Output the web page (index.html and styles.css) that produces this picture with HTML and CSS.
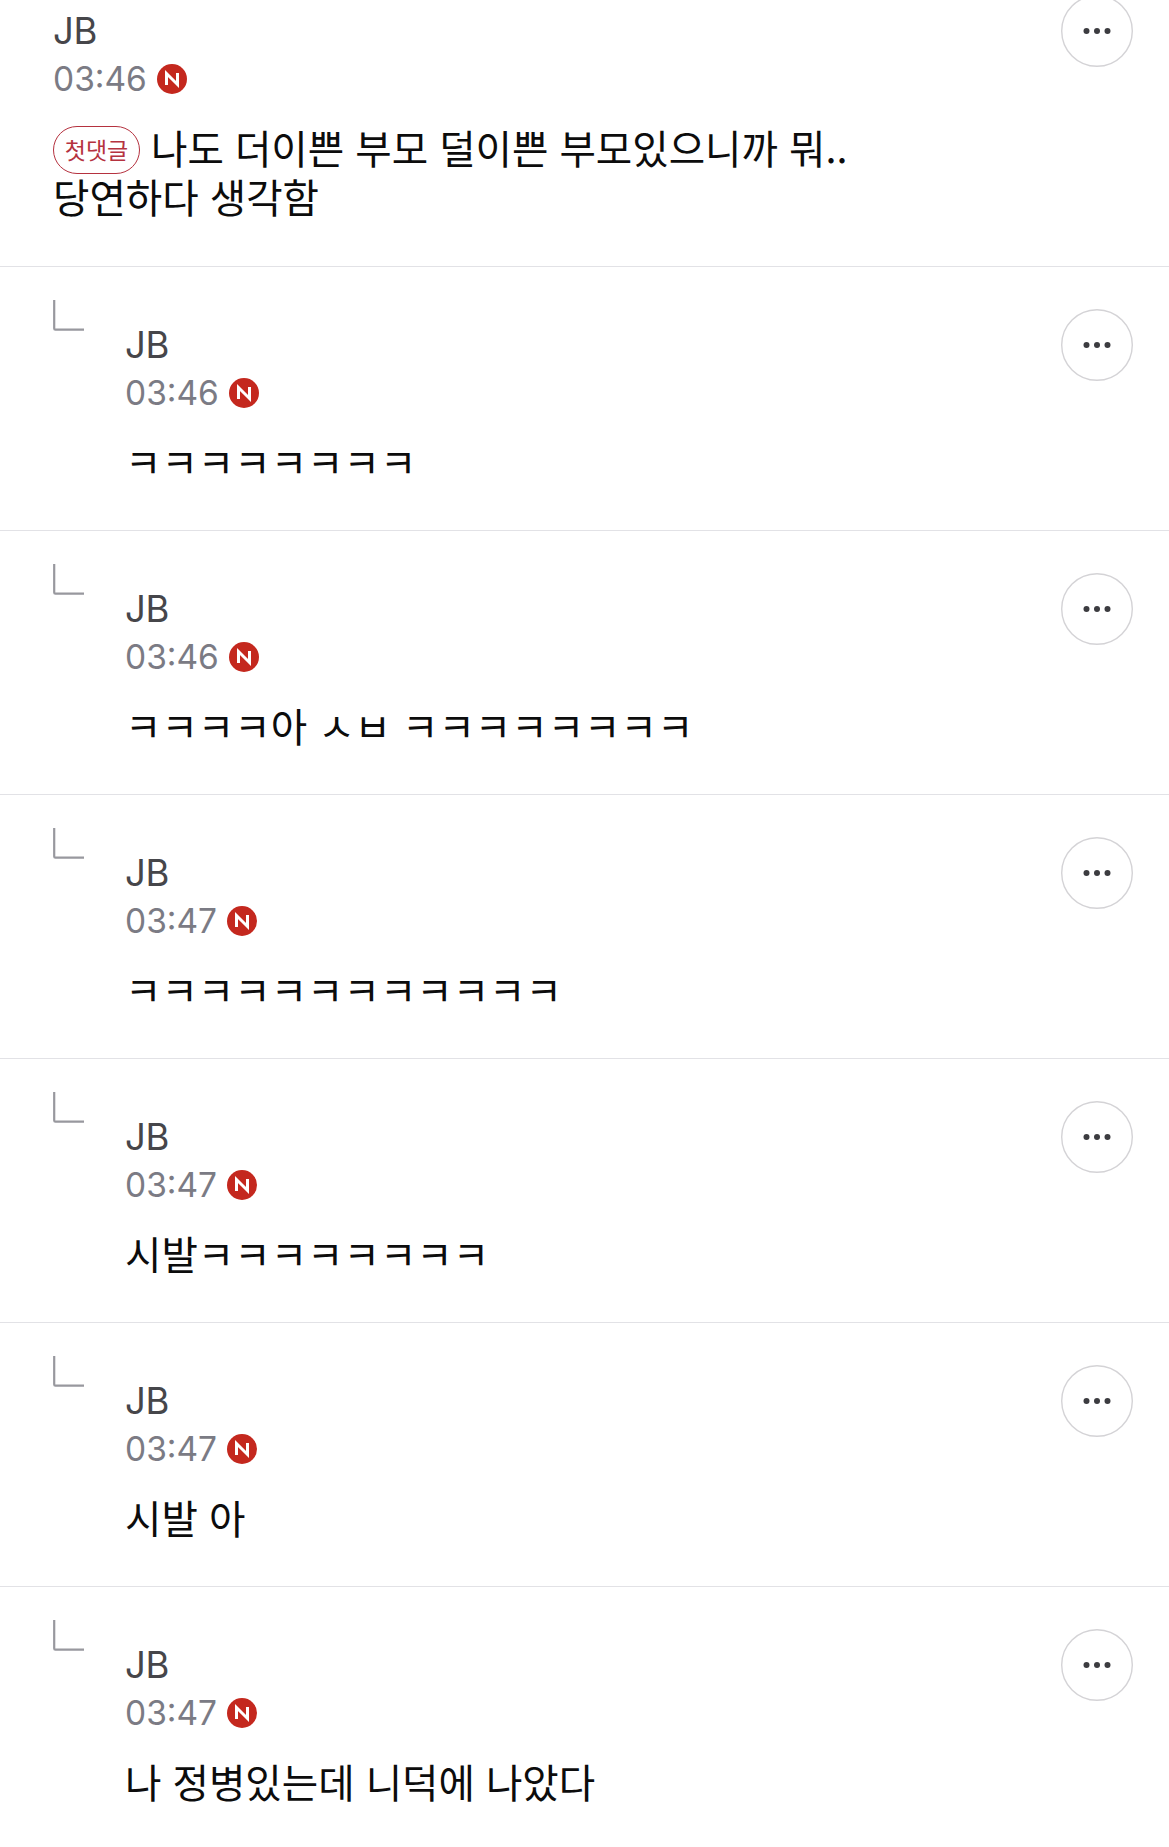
FILE: index.html
```html
<!DOCTYPE html>
<html lang="ko">
<head>
<meta charset="utf-8">
<title>댓글</title>
<link rel="stylesheet" href="styles.css">
</head>
<body>
<svg class="defs" width="0" height="0" aria-hidden="true">
  <symbol id="n" viewBox="0 0 30 30"><circle cx="15" cy="15" r="15" fill="#c4281e"/><path d="M9.5 21V9.5L20.5 20.5V9" fill="none" stroke="#fff" stroke-width="3"/></symbol>
  <symbol id="reply" viewBox="0 0 31 31"><path d="M1.2 0V28.5a1.2 1.2 0 0 0 1.2 1.2H31" fill="none" stroke="#98989e" stroke-width="2.2"/></symbol>
  <symbol id="dots" viewBox="0 0 72 72"><circle cx="36" cy="36" r="35.3" fill="#fff" stroke="#d4d3d6" stroke-width="1.4"/><g fill="#3c3c40"><circle cx="25.5" cy="36" r="3"/><circle cx="36" cy="36" r="3"/><circle cx="46.5" cy="36" r="3"/></g></symbol>
</svg>
<main class="list">
  <article class="row first">
    <div class="content">
      <div class="name">JB</div>
      <div class="meta"><span>03:46</span><svg class="new"><use href="#n"/></svg></div>
      <p class="body"><span class="pill">첫댓글</span>나도 더이쁜 부모 덜이쁜 부모있으니까 뭐..<br>당연하다 생각함</p>
    </div>
    <svg class="more"><use href="#dots"/></svg>
  </article>
  <article class="row">
    <svg class="reply"><use href="#reply"/></svg>
    <div class="content">
      <div class="name">JB</div>
      <div class="meta"><span>03:46</span><svg class="new"><use href="#n"/></svg></div>
      <p class="body">ㅋㅋㅋㅋㅋㅋㅋㅋ</p>
    </div>
    <svg class="more"><use href="#dots"/></svg>
  </article>
  <article class="row">
    <svg class="reply"><use href="#reply"/></svg>
    <div class="content">
      <div class="name">JB</div>
      <div class="meta"><span>03:46</span><svg class="new"><use href="#n"/></svg></div>
      <p class="body">ㅋㅋㅋㅋ아 ㅅㅂ ㅋㅋㅋㅋㅋㅋㅋㅋ</p>
    </div>
    <svg class="more"><use href="#dots"/></svg>
  </article>
  <article class="row">
    <svg class="reply"><use href="#reply"/></svg>
    <div class="content">
      <div class="name">JB</div>
      <div class="meta"><span>03:47</span><svg class="new"><use href="#n"/></svg></div>
      <p class="body">ㅋㅋㅋㅋㅋㅋㅋㅋㅋㅋㅋㅋ</p>
    </div>
    <svg class="more"><use href="#dots"/></svg>
  </article>
  <article class="row">
    <svg class="reply"><use href="#reply"/></svg>
    <div class="content">
      <div class="name">JB</div>
      <div class="meta"><span>03:47</span><svg class="new"><use href="#n"/></svg></div>
      <p class="body">시발ㅋㅋㅋㅋㅋㅋㅋㅋ</p>
    </div>
    <svg class="more"><use href="#dots"/></svg>
  </article>
  <article class="row">
    <svg class="reply"><use href="#reply"/></svg>
    <div class="content">
      <div class="name">JB</div>
      <div class="meta"><span>03:47</span><svg class="new"><use href="#n"/></svg></div>
      <p class="body">시발 아</p>
    </div>
    <svg class="more"><use href="#dots"/></svg>
  </article>
  <article class="row">
    <svg class="reply"><use href="#reply"/></svg>
    <div class="content">
      <div class="name">JB</div>
      <div class="meta"><span>03:47</span><svg class="new"><use href="#n"/></svg></div>
      <p class="body">나 정병있는데 니덕에 나았다</p>
    </div>
    <svg class="more"><use href="#dots"/></svg>
  </article>
</main>
</body>
</html>
```
FILE: styles.css
```css
html, body { margin: 0; padding: 0; background: #fff; overflow: hidden; height: 1847px; }
.defs { position: absolute; }
.list { margin-top: -47px; font-family: Inter, "Noto Sans CJK KR", sans-serif; }
.row { display: flex; padding: 33px 36px 45px 53px; border-bottom: 1px solid #e2e2e6; }
.row.first { padding-bottom: 46px; }
.reply { width: 31px; height: 31px; margin-right: 41px; flex: none; }
.content { flex: 1; padding-top: 21px; min-width: 0; }
.name { font-size: 36.5px; line-height: 48px; color: #46464a; letter-spacing: -0.3px; }
.meta { display: flex; align-items: center; gap: 10px; height: 48px; font-size: 33.5px; color: #7b7b84; }
.new { width: 30px; height: 30px; flex: none; }
.body { margin: 19px 0 0; font-size: 39.6px; line-height: 49px; color: #0c0c0c; font-family: "Noto Sans CJK KR", sans-serif; font-weight: 400; white-space: nowrap; }
.pill { display: inline-block; box-sizing: border-box; width: 87px; height: 48px; margin: 4px 11px -3px 0; border: 1.8px solid #b5323f; border-radius: 24px; font-size: 23px; line-height: 44px; color: #b5323f; text-align: center; vertical-align: top; }
.more { width: 72px; height: 72px; margin-top: 9px; flex: none; }
```
